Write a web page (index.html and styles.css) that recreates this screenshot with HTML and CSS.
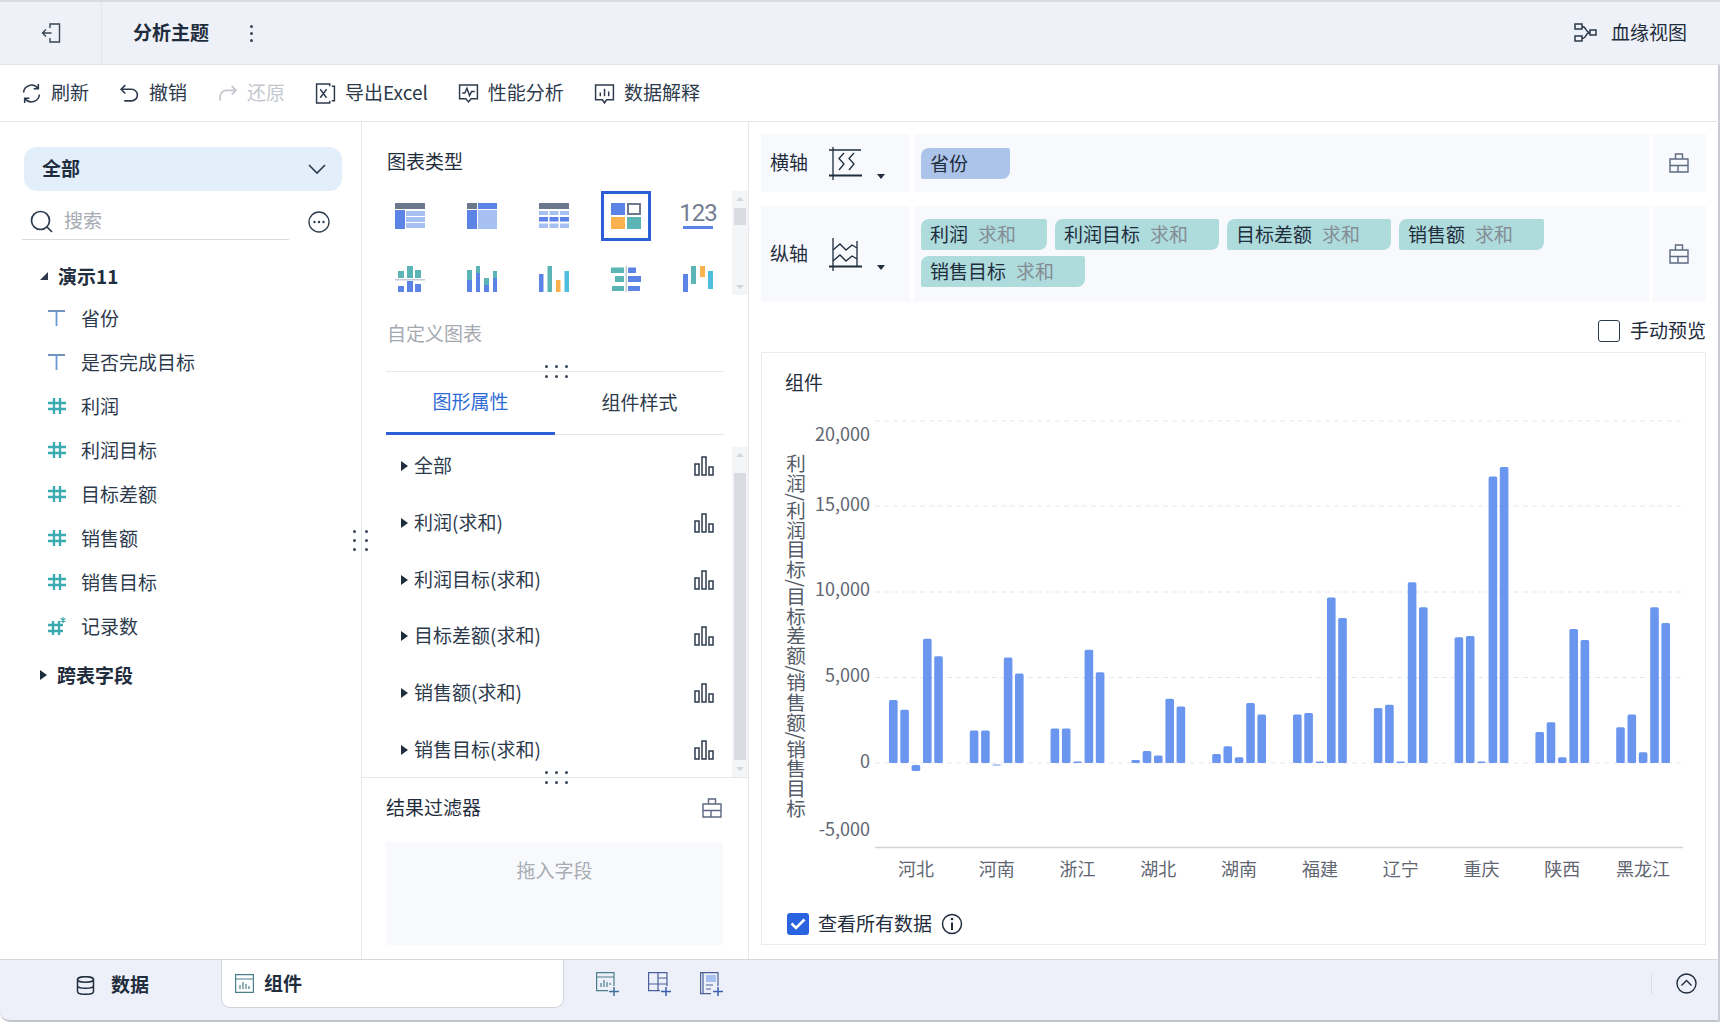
FILE: index.html
```html
<!DOCTYPE html>
<html lang="zh-CN">
<head>
  <meta charset="UTF-8" />
  <title>分析主题</title>
  <link rel="stylesheet" href="styles.css">
</head>
<body>
  <svg class="sprite" xmlns="http://www.w3.org/2000/svg">
    <symbol id="i-box" viewBox="0 0 20 20"><path d="M6.500 6V1h7v5M1 6h18v13H1zM1 12.500h18M9 12.500V19" fill="none" stroke="currentColor" stroke-width="1.4"/></symbol>
    <symbol id="i-bars" viewBox="0 0 20 20"><path d="M1 8h4v11H1zM8 1h4v18H8zM15 11h4v8h-4z" fill="none" stroke="currentColor" stroke-width="1.5"/></symbol>
    <symbol id="i-text" viewBox="0 0 18 18"><path d="M0 2h17" stroke="#4f79ae" stroke-width="1.6"/><path d="M8.500 2v15" stroke="#6a98d8" stroke-width="1.8"/></symbol>
    <symbol id="i-num" viewBox="0 0 18 18"><path d="M6 1v16M12 1v16M0 6h18M0 12h18" stroke="#3aa9b0" stroke-width="2.3" fill="none"/></symbol>
  </svg>

  <div class="app">
    <header class="header">
      <div class="back">
        <svg width="20" height="20" viewBox="0 0 20 20" fill="none" stroke="#3a4656" stroke-width="1.4"><path d="M9 5V1h9.500v18H9v-4M10.500 10H1.500M5 6.500 1.500 10 5 13.500"/></svg>
      </div>
      <div class="title">分析主题</div>
      <div class="kebab"><i></i><i></i><i></i></div>
      <div class="lineage">
        <svg width="23" height="20" viewBox="0 0 23 20" fill="none" stroke="#2c3a4c" stroke-width="1.5"><path d="M1 1h7v5H1zM1 13h7v5H1zM16 7h6v5h-6zM8 3.500c5 0 3 6 8 6M8 15.500c5 0 3-6 8-6"/></svg>
        <span>血缘视图</span>
      </div>
    </header>

    <nav class="toolbar">
      <div class="tool">
        <svg width="21" height="21" viewBox="0 0 20 20" fill="none" stroke="currentColor" stroke-width="1.5"><path d="M2.500 9A7.500 7.500 0 0 1 16 5M17.500 11A7.500 7.500 0 0 1 4 15M16.500 1v4.500H12M3.500 19v-4.500H8"/></svg>
        <span>刷新</span>
      </div>
      <div class="tool">
        <svg width="21" height="21" viewBox="0 0 20 20" fill="none" stroke="currentColor" stroke-width="1.5"><path d="M6 2 2 6l4 4M2.500 6H12a5.500 5.500 0 0 1 0 11H5"/></svg>
        <span>撤销</span>
      </div>
      <div class="tool disabled">
        <svg width="21" height="21" viewBox="0 0 20 20" fill="none" stroke="currentColor" stroke-width="1.7"><path d="M14 3l4 4-4 4M17.500 7H9a6 6 0 0 0-6 6v4"/></svg>
        <span>还原</span>
      </div>
      <div class="tool">
        <svg width="21" height="21" viewBox="0 0 20 20" fill="none" stroke="currentColor" stroke-width="1.4"><path d="M14 3V1H1.500v18H14v-2M5 6l6 8M11 6l-6 8M16 3h2.500v14H16"/></svg>
        <span>导出Excel</span>
      </div>
      <div class="tool">
        <svg width="21" height="21" viewBox="0 0 20 20" fill="none" stroke="currentColor" stroke-width="1.4"><path d="M1.500 2h17v13h-6l-2.500 3-2.500-3h-6zM4 9.500h2.500L8.500 5l2.500 7 2-4h3"/></svg>
        <span>性能分析</span>
      </div>
      <div class="tool">
        <svg width="21" height="21" viewBox="0 0 20 20" fill="none" stroke="currentColor" stroke-width="1.4"><path d="M1.500 2h17v14H12l-2 3-2-3H1.500zM6 9v3.500M10 5.500v7M14 8v4.500"/></svg>
        <span>数据解释</span>
      </div>
    </nav>

    <main class="workspace">
      <aside class="sidebar">
        <div class="scope">
          <b>全部</b>
          <svg width="18" height="11" viewBox="0 0 18 11" fill="none" stroke="#2c3a4c" stroke-width="1.6"><path d="M1 1l8 8 8-8"/></svg>
        </div>
        <div class="search-row">
          <div class="search">
            <svg width="23" height="23" viewBox="0 0 23 23" fill="none" stroke="#2c3a4c" stroke-width="1.7"><circle cx="10.500" cy="10.500" r="9"/><path d="M17 17l5 5"/></svg>
            <span>搜索</span>
          </div>
          <svg class="more" width="22" height="22" viewBox="0 0 22 22" fill="#2c3a4c"><circle cx="11" cy="11" r="10" fill="none" stroke="#2c3a4c" stroke-width="1.3"/><circle cx="6.500" cy="11" r="1.200"/><circle cx="11" cy="11" r="1.200"/><circle cx="15.500" cy="11" r="1.200"/></svg>
        </div>

        <div class="tree-head first"><i class="tri-open"></i><b>演示11</b></div>
        <div class="field"><svg width="18" height="18"><use href="#i-text"/></svg><span>省份</span></div>
        <div class="field"><svg width="18" height="18"><use href="#i-text"/></svg><span>是否完成目标</span></div>
        <div class="field"><svg width="18" height="18"><use href="#i-num"/></svg><span>利润</span></div>
        <div class="field"><svg width="18" height="18"><use href="#i-num"/></svg><span>利润目标</span></div>
        <div class="field"><svg width="18" height="18"><use href="#i-num"/></svg><span>目标差额</span></div>
        <div class="field"><svg width="18" height="18"><use href="#i-num"/></svg><span>销售额</span></div>
        <div class="field"><svg width="18" height="18"><use href="#i-num"/></svg><span>销售目标</span></div>
        <div class="field">
          <svg width="18" height="18" viewBox="0 0 18 18"><path d="M5 4v14M11 4v14M0 8h15M0 14h15" stroke="#3aa9b0" stroke-width="2.300" fill="none"/><path d="M15 0v6M12.500 1.500l5 3M17.500 1.500l-5 3" stroke="#3aa9b0" stroke-width="1.200"/></svg>
          <span>记录数</span>
        </div>
        <div class="tree-head"><i class="tri"></i><b>跨表字段</b></div>

        <div class="grip grip-v"><i></i><i></i><i></i><i></i><i></i><i></i></div>
      </aside>

      <section class="config">
        <div class="section-title">图表类型</div>
        <div class="type-area">
          <div class="type-grid">
            <div class="type-item"><svg width="30" height="26" viewBox="0 0 30 26"><rect width="30" height="6" fill="#6c788c"/><rect y="7" width="10" height="19" fill="#5b84e6"/><rect x="11" y="8" width="19" height="5" fill="#a6c1f1"/><rect x="11" y="14" width="19" height="5" fill="#a6c1f1"/><rect x="11" y="20" width="19" height="5" fill="#a6c1f1"/></svg></div>
            <div class="type-item"><svg width="30" height="26" viewBox="0 0 30 26"><rect width="10" height="6" fill="#6c788c"/><rect x="11" width="19" height="6" fill="#5b84e6"/><rect y="7" width="10" height="19" fill="#5b84e6"/><rect x="11" y="7" width="19" height="19" fill="#a6c1f1"/></svg></div>
            <div class="type-item"><svg width="30" height="26" viewBox="0 0 30 26"><rect width="30" height="6" fill="#6c788c"/><path d="M0 8h9v4H0zM10.500 8h9v4h-9zM21 8h9v4h-9zM0 20.500h9V25H0zM10.500 20.500h9V25h-9zM21 20.500h9V25h-9z" fill="#a6c1f1"/><path d="M0 14h9v4.500H0zM10.500 14h9v4.500h-9zM21 14h9v4.500h-9z" fill="#5b84e6"/></svg></div>
            <div class="type-item selected"><svg width="30" height="26" viewBox="0 0 30 26"><rect width="14" height="12" fill="#5b84e6"/><rect x="17" y="1" width="12" height="10" fill="none" stroke="#6c788c" stroke-width="2"/><rect y="14" width="14" height="12" fill="#fbb14e"/><rect x="16" y="14" width="14" height="12" fill="#5cb5b5"/></svg></div>
            <div class="type-item"><div class="type-num"><span>123</span><i></i></div></div>

            <div class="type-item"><svg width="30" height="26" viewBox="0 0 30 26"><path d="M3 5h6v7H3zM12 0h6v12h-6zM20 4h6v8h-6z" fill="#5cb5b5"/><path d="M0 13h30v1.500H0z" fill="#c5ccd8"/><path d="M3 20h6v6H3zM12 15h6v11h-6zM20 18h6v8h-6z" fill="#5b84e6"/></svg></div>
            <div class="type-item"><svg width="30" height="26" viewBox="0 0 30 26"><path d="M0 4h5v10H0zM9 0h4v7H9zM17 12h5v7h-5zM26 5h4v7h-4z" fill="#5cb5b5"/><path d="M0 14h5v12H0zM9 7h4v19H9zM17 19h5v7h-5zM26 12h4v14h-4z" fill="#5b84e6"/></svg></div>
            <div class="type-item"><svg width="30" height="26" viewBox="0 0 30 26"><rect y="8" width="4.500" height="18" fill="#5b84e6"/><rect x="8.500" width="4.500" height="26" fill="#5cb5b5"/><rect x="17" y="14" width="4.500" height="12" fill="#fbb14e"/><rect x="25.500" y="5" width="4.500" height="21" fill="#4fbde0"/></svg></div>
            <div class="type-item"><svg width="30" height="26" viewBox="0 0 30 26"><path d="M0 1.500h13V7H0zM4 10h9v6H4zM1 20h12v5H1z" fill="#5cb5b5"/><path d="M17 1.500h8V7h-8zM17 10h13v6H17zM17 20h12v5H17z" fill="#5b84e6"/><path d="M14.500 0h1.500v26h-1.500z" fill="#c5ccd8"/></svg></div>
            <div class="type-item"><svg width="30" height="26" viewBox="0 0 30 26"><rect y="8" width="5" height="18" fill="#5b84e6"/><rect x="8" y="0" width="5" height="18" fill="#5cb5b5"/><rect x="17" y="0" width="5" height="11" fill="#fbb14e"/><rect x="25" y="5" width="5" height="18" fill="#4fbde0"/></svg></div>
          </div>
          <div class="scrollbar short"><i></i></div>
        </div>
        <div class="custom-chart">自定义图表</div>

        <div class="tabs">
          <div class="tab active">图形属性</div>
          <div class="tab">组件样式</div>
          <div class="grip grip-h"><i></i><i></i><i></i><i></i><i></i><i></i></div>
        </div>

        <div class="attr-area">
          <div class="attr-list">
            <div class="attr"><i class="tri"></i><span>全部</span><svg width="20" height="20"><use href="#i-bars"/></svg></div>
            <div class="attr"><i class="tri"></i><span>利润(求和)</span><svg width="20" height="20"><use href="#i-bars"/></svg></div>
            <div class="attr"><i class="tri"></i><span>利润目标(求和)</span><svg width="20" height="20"><use href="#i-bars"/></svg></div>
            <div class="attr"><i class="tri"></i><span>目标差额(求和)</span><svg width="20" height="20"><use href="#i-bars"/></svg></div>
            <div class="attr"><i class="tri"></i><span>销售额(求和)</span><svg width="20" height="20"><use href="#i-bars"/></svg></div>
            <div class="attr"><i class="tri"></i><span>销售目标(求和)</span><svg width="20" height="20"><use href="#i-bars"/></svg></div>
          </div>
          <div class="scrollbar long"><i></i></div>
        </div>

        <div class="filter">
          <div class="grip grip-h"><i></i><i></i><i></i><i></i><i></i><i></i></div>
          <div class="filter-head"><span>结果过滤器</span><svg class="box-icon" width="20" height="20"><use href="#i-box"/></svg></div>
          <div class="drop">拖入字段</div>
        </div>
      </section>

      <section class="preview">
        <div class="axis-row single">
          <div class="axis-label">
            <span>横轴</span>
            <svg width="33" height="33" viewBox="0 0 33 33" fill="none" stroke="#1f2d3d" stroke-width="1.300"><path d="M4 0v33M0 3h32"/><path d="M0 28.500h33" stroke-width="2"/><path d="M15 6l-5 5.500 5 5.500-5 6M25 6l-5 5.500 5 5.500-5 6"/></svg>
            <i class="tri-down"></i>
          </div>
          <div class="axis-drop"><div class="pill dim"><span>省份</span></div></div>
          <div class="axis-tool"><svg width="20" height="20"><use href="#i-box"/></svg></div>
        </div>
        <div class="axis-row double">
          <div class="axis-label">
            <span>纵轴</span>
            <svg width="33" height="33" viewBox="0 0 33 33" fill="none" stroke="#1f2d3d" stroke-width="1.300"><path d="M4 0v33M28 3v25"/><path d="M0 28.500h33" stroke-width="2"/><path d="M4 12l7-6 6 6 6-5 5 3M4 23l7-6 6 6 6-5 5 3"/></svg>
            <i class="tri-down"></i>
          </div>
          <div class="axis-drop">
            <div class="pill teal"><span>利润</span><em>求和</em></div>
            <div class="pill teal"><span>利润目标</span><em>求和</em></div>
            <div class="pill teal"><span>目标差额</span><em>求和</em></div>
            <div class="pill teal"><span>销售额</span><em>求和</em></div>
            <div class="pill teal"><span>销售目标</span><em>求和</em></div>
          </div>
          <div class="axis-tool"><svg width="20" height="20"><use href="#i-box"/></svg></div>
        </div>

        <div class="manual"><i class="check-empty"></i><span>手动预览</span></div>

        <div class="card">
          <div class="card-title">组件</div>
          <svg class="chart" width="943" height="490" viewBox="0 0 943 490">
            <g class="grid">
              <path d="M113 21H921M113 106H921M113 192H921M113 277.500H921M113 363H921"/>
            </g>
            <path class="axis" d="M113 447.500H921"/>
            <g class="tick">
              <text x="108" y="41">20,000</text>
              <text x="108" y="111">15,000</text>
              <text x="108" y="196">10,000</text>
              <text x="108" y="282">5,000</text>
              <text x="108" y="368">0</text>
              <text x="108" y="436">-5,000</text>
            </g>
            <text class="y-title" x="34" y="236">利润/利润目标/目标差额/销售额/销售目标</text>

            <g class="bars" transform="translate(127 363)">
              <rect x="0" y="-62.900" width="8.600" height="62.900"/><rect x="11.300" y="-53.200" width="8.600" height="53.200"/><rect x="22.600" y="2" width="8.600" height="6"/><rect x="34" y="-124.300" width="8.600" height="124.300"/><rect x="45.200" y="-106.800" width="8.600" height="106.800"/>
            </g>
            <g class="bars" transform="translate(207.800 363)">
              <rect x="0" y="-32.500" width="8.600" height="32.500"/><rect x="11.300" y="-32.500" width="8.600" height="32.500"/><rect x="22.600" y="1.500" width="8.600" height="1"/><rect x="34" y="-105.400" width="8.600" height="105.400"/><rect x="45.200" y="-89.600" width="8.600" height="89.600"/>
            </g>
            <g class="bars" transform="translate(288.600 363)">
              <rect x="0" y="-34.600" width="8.600" height="34.600"/><rect x="11.300" y="-34.600" width="8.600" height="34.600"/><rect x="22.600" y="-1.400" width="8.600" height="1.400"/><rect x="34" y="-113.200" width="8.600" height="113.200"/><rect x="45.200" y="-90.700" width="8.600" height="90.700"/>
            </g>
            <g class="bars" transform="translate(369.400 363)">
              <rect x="0" y="-2.900" width="8.600" height="2.900"/><rect x="11.300" y="-12.100" width="8.600" height="12.100"/><rect x="22.600" y="-7.500" width="8.600" height="7.500"/><rect x="34" y="-64.300" width="8.600" height="64.300"/><rect x="45.200" y="-56.400" width="8.600" height="56.400"/>
            </g>
            <g class="bars" transform="translate(450.200 363)">
              <rect x="0" y="-8.900" width="8.600" height="8.900"/><rect x="11.300" y="-16.800" width="8.600" height="16.800"/><rect x="22.600" y="-5.700" width="8.600" height="5.700"/><rect x="34" y="-60" width="8.600" height="60"/><rect x="45.200" y="-48.600" width="8.600" height="48.600"/>
            </g>
            <g class="bars" transform="translate(531 363)">
              <rect x="0" y="-48.600" width="8.600" height="48.600"/><rect x="11.300" y="-50" width="8.600" height="50"/><rect x="22.600" y="-1.400" width="8.600" height="1.400"/><rect x="34" y="-165.400" width="8.600" height="165.400"/><rect x="45.200" y="-145" width="8.600" height="145"/>
            </g>
            <g class="bars" transform="translate(611.800 363)">
              <rect x="0" y="-55" width="8.600" height="55"/><rect x="11.300" y="-58.200" width="8.600" height="58.200"/><rect x="22.600" y="-1.400" width="8.600" height="1.400"/><rect x="34" y="-180.700" width="8.600" height="180.700"/><rect x="45.200" y="-155.700" width="8.600" height="155.700"/>
            </g>
            <g class="bars" transform="translate(692.600 363)">
              <rect x="0" y="-125.700" width="8.600" height="125.700"/><rect x="11.300" y="-127.100" width="8.600" height="127.100"/><rect x="22.600" y="-1.400" width="8.600" height="1.400"/><rect x="34" y="-286.400" width="8.600" height="286.400"/><rect x="45.200" y="-296" width="8.600" height="296"/>
            </g>
            <g class="bars" transform="translate(773.400 363)">
              <rect x="0" y="-31" width="8.600" height="31"/><rect x="11.300" y="-40.700" width="8.600" height="40.700"/><rect x="22.600" y="-5.700" width="8.600" height="5.700"/><rect x="34" y="-133.900" width="8.600" height="133.900"/><rect x="45.200" y="-122.900" width="8.600" height="122.900"/>
            </g>
            <g class="bars" transform="translate(854.200 363)">
              <rect x="0" y="-35.700" width="8.600" height="35.700"/><rect x="11.300" y="-48.600" width="8.600" height="48.600"/><rect x="22.600" y="-10.700" width="8.600" height="10.700"/><rect x="34" y="-155.700" width="8.600" height="155.700"/><rect x="45.200" y="-140" width="8.600" height="140"/>
            </g>

            <g class="cat">
              <text x="153.900" y="476">河北</text>
              <text x="234.700" y="476">河南</text>
              <text x="315.500" y="476">浙江</text>
              <text x="396.300" y="476">湖北</text>
              <text x="477.100" y="476">湖南</text>
              <text x="557.900" y="476">福建</text>
              <text x="638.700" y="476">辽宁</text>
              <text x="719.500" y="476">重庆</text>
              <text x="800.300" y="476">陕西</text>
              <text x="881.100" y="476">黑龙江</text>
            </g>
          </svg>
          <div class="all-data">
            <i class="check-on"><svg width="16" height="12" viewBox="0 0 16 12" fill="none" stroke="#fff" stroke-width="2.600"><path d="M1.500 5.500 6 10l8.500-8.500"/></svg></i>
            <span>查看所有数据</span>
            <svg width="22" height="22" viewBox="0 0 22 22" fill="none" stroke="#1f2d3d" stroke-width="1.500"><circle cx="11" cy="11" r="9.500"/><path d="M11 9.500V17" stroke-width="2"/><circle cx="11" cy="6" r="1.300" fill="#1f2d3d" stroke="none"/></svg>
          </div>
        </div>
      </section>
    </main>

    <footer class="footer">
      <div class="foot-tab">
        <svg width="19" height="19" viewBox="0 0 19 19" fill="none" stroke="#1f2d3d" stroke-width="1.500"><ellipse cx="9.500" cy="3.500" rx="8" ry="2.800"/><path d="M1.500 3.500v12c0 1.600 3.600 2.800 8 2.800s8-1.200 8-2.800v-12M1.500 9.500c0 1.600 3.600 2.800 8 2.800s8-1.200 8-2.800"/></svg>
        <b>数据</b>
      </div>
      <div class="foot-tab active">
        <svg width="19" height="19" viewBox="0 0 19 19" fill="none" stroke="#4a7f8c" stroke-width="1.200"><path d="M.6.600h17.800v17.800H.600zM.6 5h17.800M5 15v-4M8 15V8M11 15v-5M14 15v-3"/></svg>
        <b>组件</b>
      </div>
      <div class="foot-add">
        <svg width="24" height="24" viewBox="0 0 24 24" fill="none" stroke="#4a7f8c" stroke-width="1.200"><path d="M18 14V.6H.6v18H12M.6 5H18M5 15v-4M8 15V8M11 15v-5M14 13v-2"/><path d="M13 19.500h10M18 15v9" stroke="#3d6f9a" stroke-width="1.500"/></svg>
        <svg width="24" height="24" viewBox="0 0 24 24" fill="none" stroke="#4a5f9a" stroke-width="1.200"><path d="M19 14V.6H.6v18H12M.6 12H19M10 .6v18M10 6h9"/><path d="M13 19.500h10M18 15v9" stroke="#3d5fb0" stroke-width="1.500"/></svg>
        <svg width="24" height="24" viewBox="0 0 24 24" fill="none" stroke="#4a5f9a" stroke-width="1.200"><path d="M18 14V.6H.6v21H11M3 .6v21"/><path d="M6 3h10v7H6z" fill="#a6c1f1" stroke="none"/><path d="M6 13h7M6 17h5"/><path d="M13 19.500h10M18 15v9" stroke="#3d5fb0" stroke-width="1.500"/></svg>
      </div>
      <div class="foot-right">
        <svg width="21" height="21" viewBox="0 0 21 21" fill="none" stroke="#1f2d3d" stroke-width="1.400"><circle cx="10.500" cy="10.500" r="9.500"/><path d="M5.500 12.500l5-5 5 5"/></svg>
      </div>
    </footer>
  </div>
</body>
</html>
```

FILE: styles.css
```css
* {
  box-sizing: border-box;
}

body {
  margin: 0;
  background: #fff;
  font-family: "Noto Sans CJK SC", "Noto Sans", sans-serif;
  font-size: 19px;
  color: #1f2d3d;
}

.sprite {
  display: none;
}

.app {
  width: 1720px;
  height: 1022px;
  display: flex;
  flex-direction: column;
  overflow: hidden;
}

/* the font sits a little low in its box, lift it back up */
.title,
.lineage span,
.tool span,
.scope b,
.search span,
.attr span,
.filter-head span,
.axis-label span,
.pill span,
.pill em,
.manual span,
.all-data span,
.foot-tab b {
  padding-bottom: 3px;
}

.tree-head b,
.field span {
  padding-bottom: 1px;
}

/* header */
.header {
  height: 65px;
  flex: none;
  display: flex;
  align-items: center;
  background: #eef1f7;
  border-top: 2px solid #d9dce3;
  border-bottom: 1px solid #e0e3e9;
}

.back {
  width: 102px;
  height: 100%;
  padding-left: 41px;
  display: flex;
  align-items: center;
  border-right: 1px solid #e4e7ee;
}

.title {
  margin-left: 31px;
  font-weight: 700;
}

.kebab {
  margin-left: 41px;
  display: flex;
  flex-direction: column;
  gap: 4px;
}

.kebab i {
  width: 3px;
  height: 3px;
  border-radius: 50%;
  background: #3a4656;
}

.lineage {
  margin-left: auto;
  margin-right: 33px;
  display: flex;
  align-items: center;
  gap: 14px;
}

/* toolbar */
.toolbar {
  height: 57px;
  flex: none;
  display: flex;
  align-items: center;
  gap: 30px;
  padding-left: 21px;
  border-bottom: 1px solid #e4e6ea;
  border-right: 2px solid #c9ccd2;
}

.tool {
  display: flex;
  align-items: center;
  gap: 9px;
  color: #2c3a4c;
}

.tool.disabled {
  color: #c4c8ce;
}

/* main area */
.workspace {
  flex: 1;
  min-height: 0;
  display: flex;
  border-right: 2px solid #c9ccd2;
}

.sidebar {
  width: 362px;
  flex: none;
  position: relative;
  padding-top: 25px;
  border-right: 1px solid #e6e8ec;
}

.scope {
  width: 318px;
  height: 44px;
  margin-left: 24px;
  padding: 0 16px 0 18px;
  display: flex;
  align-items: center;
  justify-content: space-between;
  background: #e3eefb;
  border-radius: 13px;
}

.search-row {
  margin-top: 12px;
  padding-left: 22px;
  display: flex;
  align-items: center;
}

.search {
  width: 267px;
  height: 37px;
  padding-left: 8px;
  display: flex;
  align-items: center;
  gap: 11px;
  color: #a6abb3;
  border-bottom: 1px solid #d9dbdf;
}

.more {
  margin-left: 19px;
}

.tree-head {
  height: 44px;
  padding-left: 40px;
  display: flex;
  align-items: center;
  gap: 10px;
  margin-top: 5px;
}

.tree-head.first {
  height: 40px;
  margin-top: 16px;
}

.tri-open {
  width: 0;
  height: 0;
  border-bottom: 8px solid #2c3a4c;
  border-left: 8px solid transparent;
}

.tri {
  width: 0;
  height: 0;
  border-left: 7px solid #1f2d3d;
  border-top: 5.5px solid transparent;
  border-bottom: 5.5px solid transparent;
}

.field {
  height: 44px;
  padding-left: 48px;
  display: flex;
  align-items: center;
  gap: 15px;
  color: #2c3a4c;
}

.grip {
  display: grid;
  position: absolute;
}

.grip i {
  width: 3px;
  height: 3px;
  border-radius: 50%;
  background: #3a4656;
}

.grip-v {
  right: -7px;
  top: 408px;
  grid-template-columns: 3px 3px;
  column-gap: 9px;
  row-gap: 6px;
  z-index: 1;
}

.grip-h {
  left: 159px;
  top: -7px;
  grid-template-columns: 3px 3px 3px;
  column-gap: 7px;
  row-gap: 7px;
}

/* config column */
.config {
  width: 387px;
  flex: none;
  display: flex;
  flex-direction: column;
  border-right: 1px solid #e6e8ec;
}

.section-title {
  margin: 25px 0 0 25px;
  height: 29px;
  line-height: 28px;
}

.type-area {
  height: 104px;
  margin-top: 15px;
  padding-left: 33px;
  display: flex;
  justify-content: space-between;
}

.type-grid {
  display: grid;
  grid-template-columns: repeat(5, 30px);
  grid-template-rows: 50px 26px;
  column-gap: 42px;
  row-gap: 25px;
}

.type-item {
  display: flex;
  align-items: center;
  justify-content: center;
}

.type-item.selected {
  width: 50px;
  height: 50px;
  margin: 0 -10px;
  border: 3px solid #2a5fd6;
}

.type-num {
  width: 30px;
  height: 26px;
  display: flex;
  flex-direction: column;
  align-items: center;
  justify-content: space-between;
  font-family: "Roboto", "Noto Sans", sans-serif;
  font-size: 24px;
  line-height: 21px;
  letter-spacing: -1px;
  color: #737e90;
}

.type-num i {
  width: 30px;
  height: 3px;
  background: #5b84e6;
}

.scrollbar {
  width: 16px;
  flex: none;
  position: relative;
  background: #f4f5f7;
  padding: 0 2px;
}

.scrollbar::before,
.scrollbar::after {
  content: "";
  position: absolute;
  left: 4px;
  border-left: 4px solid transparent;
  border-right: 4px solid transparent;
}

.scrollbar::before {
  top: 6px;
  border-bottom: 4px solid #d4d6db;
}

.scrollbar::after {
  bottom: 6px;
  border-top: 4px solid #d4d6db;
}

.scrollbar i {
  display: block;
  background: #d9dbe1;
}

.scrollbar.short i {
  height: 17px;
  margin-top: 17px;
}

.scrollbar.long {
  margin-top: 12px;
}

.scrollbar.long i {
  height: 287px;
  margin-top: 26px;
}

.custom-chart {
  margin: 24px 0 0 25px;
  height: 28px;
  line-height: 28px;
  color: #a5a9b0;
}

.tabs {
  width: 338px;
  height: 64px;
  margin: 24px 0 0 24px;
  position: relative;
  display: flex;
  border-top: 1px solid #e4e7ee;
}

.tab {
  width: 169px;
  height: 63px;
  padding-bottom: 4px;
  display: flex;
  align-items: center;
  justify-content: center;
  border-bottom: 1px solid #e4e7ee;
  color: #2c3a4c;
}

.tab.active {
  color: #2f6bd6;
  border-bottom: 3px solid #2a5fd6;
}

.attr-area {
  height: 342px;
  flex: none;
  padding-left: 24px;
  display: flex;
  gap: 8px;
}

.attr-list {
  width: 338px;
  padding-top: 3px;
  overflow: hidden;
}

.attr {
  height: 56.7px;
  padding: 0 10px 0 15px;
  display: flex;
  align-items: center;
  gap: 6px;
  color: #2c3a4c;
}

.attr span {
  flex: 1;
}

.attr svg {
  color: #2c3a4c;
}

.filter {
  flex: 1;
  position: relative;
  padding: 0 25px 14px 24px;
  display: flex;
  flex-direction: column;
  border-top: 1px solid #e4e6ea;
}

.filter .grip-h {
  left: 183px;
  top: -7px;
}

.filter-head {
  height: 64px;
  display: flex;
  align-items: center;
  justify-content: space-between;
  padding-bottom: 4px;
}

.box-icon {
  color: #5d6a80;
  margin-right: 1px;
}

.drop {
  flex: 1;
  padding-top: 14px;
  text-align: center;
  color: #a8acb3;
  background: #f7f9fd;
  border-radius: 3px;
}

/* preview */
.preview {
  flex: 1;
  min-width: 0;
  padding: 12px 12px 14px;
  display: flex;
  flex-direction: column;
}

.axis-row {
  display: flex;
  gap: 4px;
}

.axis-row.single {
  height: 58px;
}

.axis-row.double {
  height: 96px;
  margin-top: 14px;
}

.axis-label,
.axis-drop,
.axis-tool {
  background: #f7f9fd;
}

.axis-label {
  width: 149px;
  flex: none;
  padding-left: 9px;
  display: flex;
  align-items: center;
  position: relative;
}

.axis-label svg {
  margin-left: 21px;
}

.tri-down {
  width: 0;
  height: 0;
  margin: 27px 0 0 15px;
  border-top: 5px solid #1f2d3d;
  border-left: 4px solid transparent;
  border-right: 4px solid transparent;
}

.axis-drop {
  flex: 1;
  padding: 14px 7px;
  display: flex;
  flex-wrap: wrap;
  align-content: flex-start;
  gap: 6px 8px;
}

.axis-row.double .axis-drop {
  padding-top: 13px;
}

.axis-tool {
  width: 53px;
  flex: none;
  display: flex;
  align-items: center;
  justify-content: center;
  padding-right: 2px;
  color: #5d6a80;
}

.pill {
  height: 31px;
  padding: 0 31px 0 9px;
  display: flex;
  align-items: center;
  gap: 10px;
  border-radius: 8px 2px 8px 2px;
}

.pill.dim {
  background: #adc4ea;
  padding-right: 42px;
}

.pill.teal {
  background: #aedbdc;
}

.pill em {
  font-style: normal;
  color: #858c96;
}

.manual {
  height: 50px;
  padding-top: 8px;
  display: flex;
  align-items: center;
  justify-content: flex-end;
  gap: 10px;
}

.check-empty {
  width: 22px;
  height: 22px;
  border: 1.5px solid #2c3a4c;
  border-radius: 3px;
  background: #fff;
}

.card {
  flex: 1;
  display: flex;
  flex-direction: column;
  border: 1px solid #e8eaef;
}

.card-title {
  height: 47px;
  padding: 15px 0 0 23px;
  line-height: 28px;
}

.chart {
  display: block;
  flex: none;
}

.grid path {
  fill: none;
  stroke: #e4e7ed;
  stroke-dasharray: 5 4;
}

.axis {
  fill: none;
  stroke: #d2d4d8;
  stroke-width: 1.5;
}

.tick text {
  font-size: 18px;
  fill: #5f6672;
  text-anchor: end;
}

.cat text {
  font-size: 18px;
  fill: #5f6672;
  text-anchor: middle;
}

.y-title {
  font-size: 19.6px;
  fill: #555c68;
  text-anchor: middle;
  writing-mode: vertical-rl;
}

.bars rect {
  fill: #6b96f0;
  rx: 1.5px;
}

.all-data {
  margin-top: 19px;
  padding-left: 25px;
  display: flex;
  align-items: center;
  gap: 9px;
}

.check-on {
  width: 22px;
  height: 22px;
  display: flex;
  align-items: center;
  justify-content: center;
  background: #2a63e0;
  border-radius: 3px;
}

/* footer */
.footer {
  height: 63px;
  flex: none;
  display: flex;
  align-items: flex-start;
  background: #edf0f8;
  border-top: 1px solid #d5d8de;
  border-bottom: 2px solid #c4c6cb;
  border-right: 2px solid #c9ccd2;
  border-bottom-left-radius: 10px;
}

.foot-tab {
  display: flex;
  align-items: center;
  width: 221px;
  height: 48px;
  padding-left: 76px;
  gap: 16px;
  flex: none;
  margin-top: 1px;
}

.foot-tab.active {
  width: 343px;
  height: 49px;
  margin-top: -1px;
  padding-left: 13px;
  gap: 10px;
  background: #fff;
  border: 1px solid #d0d3da;
  border-top-color: #d5d8de;
  border-radius: 0 0 9px 9px;
}

.foot-add {
  margin: 12px 0 0 32px;
  display: flex;
  gap: 28px;
}

.foot-right {
  margin: 13px 0 0 auto;
  padding: 0 21px 0 24px;
  border-left: 1px solid #d9dce3;
  display: flex;
}
```
